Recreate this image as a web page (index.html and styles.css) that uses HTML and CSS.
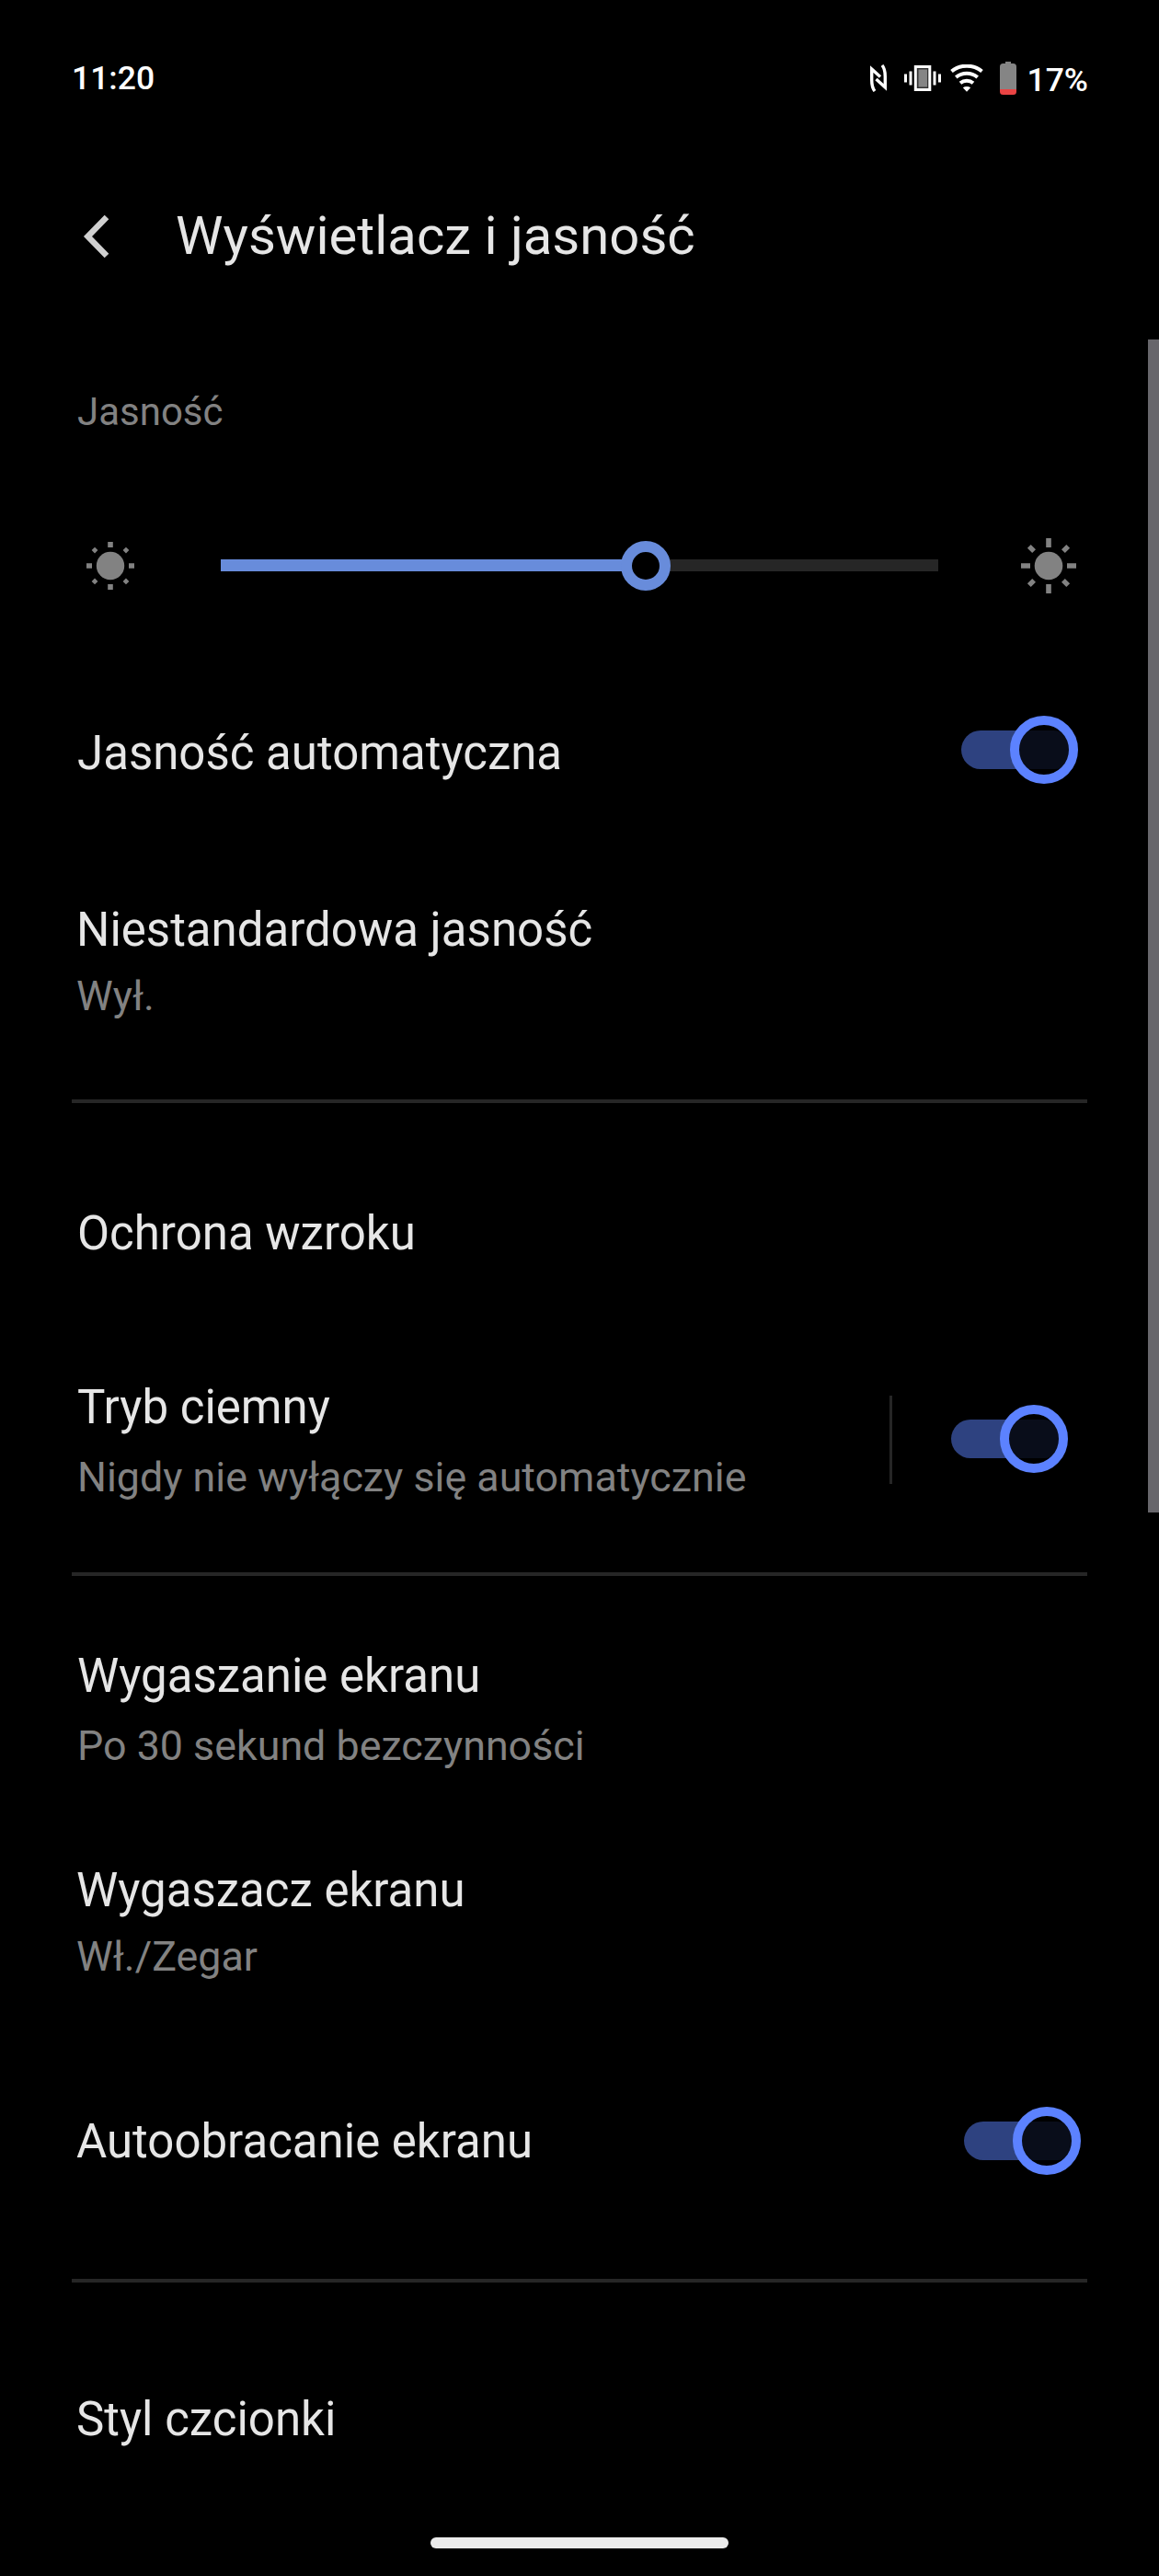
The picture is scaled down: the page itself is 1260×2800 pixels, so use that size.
FILE: index.html
```html
<!DOCTYPE html>
<html lang="pl">
<head>
    <meta charset="UTF-8">
    <meta name="viewport" content="width=device-width, initial-scale=1.0">
    <title>Wyświetlacz i jasność</title>
    <link rel="stylesheet" href="styles.css">
</head>
<body>
    <div class="screen">
        <!-- Pasek stanu -->
        <div class="status-bar">
            <span class="time">11:20</span>
            <div class="status-icons">
                <svg class="icon-nfc" width="20" height="30" viewBox="0 0 20 30" fill="none" stroke="#fff" stroke-width="3.4">
                    <path d="M6 29C3.500 26 2.700 22 2.700 17V5L12 13.500"/>
                    <path d="M14 1C16.500 4 17.300 8 17.300 13V25L7.500 16"/>
                </svg>
                <svg class="icon-vibrate" width="40" height="28" viewBox="0 0 40 28">
                    <path fill="#fff" d="M0 9.500h3v9H0zM5.500 6.500h3v15h-3zM31.500 6.500h3v15h-3zM37 9.500h3v9h-3z"/>
                    <rect x="12.300" y="1.500" width="15.500" height="25" fill="#333" stroke="#fff" stroke-width="3"/>
                    <rect x="15.500" y="4.500" width="9.500" height="19" fill="#858585"/>
                </svg>
                <svg class="icon-wifi" width="36" height="30" viewBox="0 0 36 30" fill="none" stroke="#fff" stroke-width="4">
                    <path d="M1.500 7.500C11 -.3 25 -.3 34.500 7.500"/>
                    <path d="M6.300 14C13 8.400 23 8.400 29.700 14"/>
                    <path d="M11 20.300C15 17 21 17 25 20.300"/>
                    <path fill="#fff" stroke="none" d="M13.800 25.300C16.300 23.500 19.700 23.500 22.200 25.300L18 29.800Z"/>
                </svg>
                <svg class="icon-battery" width="18" height="36" viewBox="0 0 18 36">
                    <path fill="#858585" d="M6 0h6v2h2.500A3.500 3.500 0 0 1 18 5.500V30H0V5.500A3.500 3.500 0 0 1 3.500 2H6z"/>
                    <path fill="#ea4444" d="M0 30h18v2.500A3.500 3.500 0 0 1 14.500 36h-11A3.500 3.500 0 0 1 0 32.500z"/>
                </svg>
                <span class="battery-text">17%</span>
            </div>
        </div>

        <div class="header">
            <svg class="back" width="30" height="48" viewBox="0 0 30 48" fill="none" stroke="#d0d0d0" stroke-width="6.500">
                <path d="M26 3L5.500 24L26 45"/>
            </svg>
            <h1>Wyświetlacz i jasność</h1>
        </div>

        <!-- Jasność -->
        <div class="section-label">Jasność</div>
        <div class="brightness">
            <svg width="54" height="54" viewBox="-27 -27 54 54" fill="#828282">
                <circle r="15.200"/>
                <path d="M-2.800 -26h5.600v6h-5.600zM-2.800 20h5.600v6h-5.600zM-26 -2.800h6v5.600h-6zM20 -2.800h6v5.600h-6z"/>
                <path d="M-2.400 -26.400h4.800v4.800h-4.800zM-2.400 21.600h4.800v4.800h-4.800zM-26.400 -2.400h4.800v4.800h-4.800zM21.600 -2.400h4.800v4.800h-4.800z" transform="rotate(45)"/>
            </svg>
            <div class="slider">
                <div class="slider-fill"></div>
                <div class="slider-thumb"></div>
            </div>
            <svg width="60" height="60" viewBox="-30 -30 60 60" fill="#828282">
                <circle r="15.300"/>
                <path d="M-2.800 -30h5.600v10h-5.600zM-2.800 20h5.600v10h-5.600zM-30 -2.800h10v5.600h-10zM20 -2.800h10v5.600h-10z"/>
                <path d="M-2.700 -30h5.400v7.500h-5.400zM-2.700 22.500h5.400v7.500h-5.400zM-30 -2.700h7.500v5.400h-7.500zM22.500 -2.700h7.500v5.400h-7.500z" transform="rotate(45)"/>
            </svg>
        </div>
        <div class="row row-auto">
            <div class="title">Jasność automatyczna</div>
            <div class="toggle"></div>
        </div>
        <div class="row row-custom">
            <div>
                <div class="title">Niestandardowa jasność</div>
                <div class="subtitle">Wył.</div>
            </div>
        </div>
        <hr>

        <!-- Ochrona wzroku i tryb ciemny -->
        <div class="row row-eye">
            <div class="title">Ochrona wzroku</div>
        </div>
        <div class="row row-dark">
            <div>
                <div class="title">Tryb ciemny</div>
                <div class="subtitle spaced">Nigdy nie wyłączy się automatycznie</div>
            </div>
            <div class="toggle-group">
                <div class="toggle"></div>
            </div>
        </div>
        <hr>

        <!-- Ekran -->
        <div class="row row-timeout">
            <div>
                <div class="title">Wygaszanie ekranu</div>
                <div class="subtitle spaced">Po 30 sekund bezczynności</div>
            </div>
        </div>
        <div class="row row-saver">
            <div>
                <div class="title">Wygaszacz ekranu</div>
                <div class="subtitle">Wł./Zegar</div>
            </div>
        </div>
        <div class="row row-rotate">
            <div class="title">Autoobracanie ekranu</div>
            <div class="toggle"></div>
        </div>
        <hr>
        <div class="row row-font">
            <div class="title">Styl czcionki</div>
        </div>

        <div class="scrollbar"></div>
        <div class="home-bar"></div>
    </div>
</body>
</html>
```
FILE: styles.css
```css
*, *::before, *::after {
    box-sizing: border-box;
}
body {
    margin: 0;
    background-color: #000;
    color: #e6e6e6;
    font-family: Roboto, sans-serif;
}
.screen {
    position: relative;
    width: 1260px;
    height: 2800px;
    overflow: hidden;
}
.status-bar {
    display: flex;
    justify-content: space-between;
    align-items: center;
    height: 168px;
    padding: 2px 77px 0 78px;
    color: #fff;
    font-size: 35.5px;
    font-weight: 500;
}
.status-icons {
    display: flex;
    align-items: center;
}
.icon-vibrate {
    margin-left: 18px;
}
.icon-wifi {
    margin-left: 10px;
}
.icon-battery {
    margin-left: 18px;
}
.battery-text {
    margin: 4px 0 0 12px;
}
.header {
    display: flex;
    align-items: center;
    height: 178px;
    padding-left: 90px;
}
h1 {
    margin: 0 0 2px 71px;
    font-size: 58px;
    font-weight: 400;
    line-height: 68px;
}
.section-label {
    height: 204px;
    padding-left: 84px;
    color: #828282;
    font-size: 42px;
    line-height: 204px;
}
.brightness {
    display: flex;
    align-items: center;
    justify-content: space-between;
    height: 130px;
    padding: 0 90px 0 93px;
}
.slider {
    position: relative;
    width: 780px;
    height: 13px;
    margin: 0 0 1px 3px;
    background-color: #262626;
}
.slider-fill {
    width: 462px;
    height: 13px;
    background-color: #688cdb;
}
.slider-thumb {
    position: absolute;
    top: -20px;
    left: 435px;
    width: 54px;
    height: 54px;
    border: 12px solid #688cdb;
    border-radius: 50%;
    background-color: #000;
}
.row {
    display: flex;
    align-items: center;
    justify-content: space-between;
    padding: 0 88px 0 83px;
}
.title {
    padding-top: 2px;
    font-size: 51px;
    line-height: 60px;
}
.subtitle {
    margin-top: 16px;
    color: #828282;
    font-size: 44.8px;
    line-height: 52px;
}
.spaced {
    margin-top: 20px;
}
.row-auto {
    height: 270px;
    padding-left: 84px;
}
.row-auto .title {
    padding-top: 7px;
}
.row-custom {
    align-items: flex-start;
    height: 245px;
    padding-top: 29px;
}
.row-eye {
    height: 283px;
    padding-left: 84px;
    padding-bottom: 2px;
}
.row-dark {
    height: 166px;
    margin-bottom: 61px;
    padding-left: 84px;
    padding-right: 99px;
}
.row-timeout {
    height: 289px;
    padding-left: 84px;
    padding-bottom: 2px;
}
.row-saver {
    height: 173px;
    padding-bottom: 2px;
}
.row-rotate {
    height: 302px;
    padding-top: 2px;
    padding-right: 85px;
}
.row-font {
    height: 296px;
}
.toggle-group {
    display: flex;
    align-items: center;
    height: 96px;
    padding-left: 64px;
    padding-bottom: 2px;
    border-left: 3px solid #262626;
}
.toggle {
    position: relative;
    width: 127px;
    height: 74px;
}
.toggle::before {
    content: "";
    position: absolute;
    top: 16px;
    left: 0;
    width: 122px;
    height: 42px;
    border-radius: 21px;
    background-color: #2e4280;
}
.toggle::after {
    content: "";
    position: absolute;
    top: 0;
    right: 0;
    width: 74px;
    height: 74px;
    border: 10px solid #5c82ff;
    border-radius: 50%;
    background-color: rgba(0, 0, 0, 0.8);
}
hr {
    height: 4px;
    margin: 0 78px;
    border: none;
    background-color: #262626;
}
.scrollbar {
    position: absolute;
    top: 369px;
    right: 0;
    width: 12px;
    height: 1275px;
    background-color: #67666b;
}
.home-bar {
    position: absolute;
    top: 2758px;
    left: 468px;
    width: 324px;
    height: 12px;
    border-radius: 6px;
    background-color: #ebebeb;
}
```
